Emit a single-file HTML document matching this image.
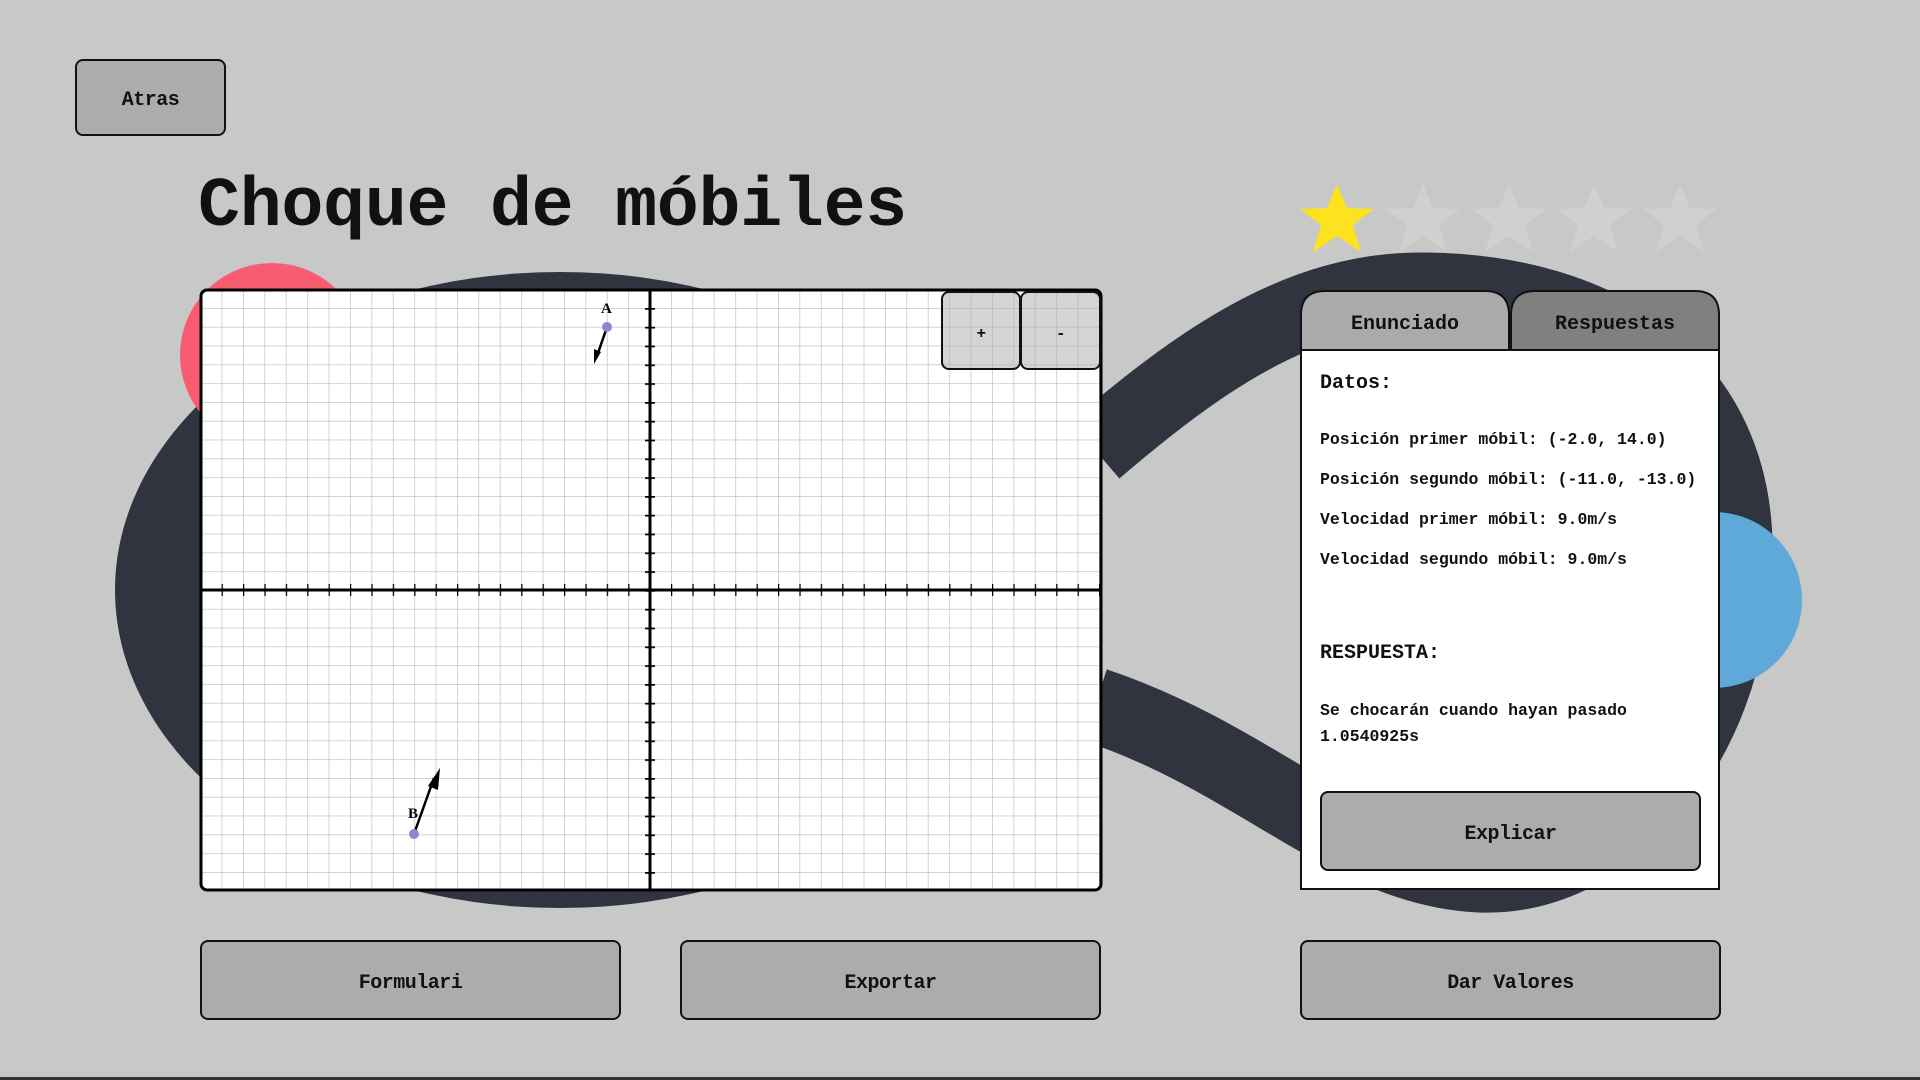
<!DOCTYPE html>
<html><head><meta charset="utf-8"><style>
*{margin:0;padding:0;box-sizing:border-box}
body{width:1920px;height:1080px;background:#c8c8c8;position:relative;overflow:hidden;font-family:"Liberation Mono","DejaVu Sans Mono",monospace}
.btn{position:absolute;background:#acacac;border:2px solid #111;border-radius:8px;display:flex;align-items:center;justify-content:center;font-weight:bold;font-size:20px;color:#111;letter-spacing:-0.5px;padding-top:6px}
.t{position:absolute;font-weight:bold;color:#111;white-space:nowrap}
</style></head><body>
<svg width="1920" height="1080" style="position:absolute;left:0;top:0">
<ellipse cx="560" cy="590" rx="445" ry="318" fill="#30343e"/>
<path d="M1095,450 C1200,360 1300,290 1420,290 C1600,290 1740,380 1735,560 C1730,760 1600,880 1480,875 C1350,870 1260,760 1095,705" fill="none" stroke="#30343e" stroke-width="75"/>
<circle cx="272" cy="355" r="92" fill="#f95c70"/>
<circle cx="1714" cy="600" r="88" fill="#5ea9d8"/>
<defs><pattern id="g" width="21.4" height="18.8" patternUnits="userSpaceOnUse" x="7.6" y="7.2"><path d="M0,0 V18.8 M0,0 H21.4" stroke="#c4c4c4" stroke-width="1.5" fill="none"/></pattern>
<pattern id="tx" width="21.4" height="20" patternUnits="userSpaceOnUse" x="7.6" y="0"><path d="M0,0 V20" stroke="#000" stroke-width="2.5"/></pattern>
<pattern id="ty" width="20" height="18.8" patternUnits="userSpaceOnUse" x="0" y="7.2"><path d="M0,0 H20" stroke="#000" stroke-width="3.5"/></pattern></defs>
<rect x="201" y="290" width="900" height="600" rx="6" fill="#fff"/>
<rect x="201" y="290" width="900" height="600" fill="url(#g)"/>
<rect x="201" y="584" width="900" height="12" fill="url(#tx)"/>
<rect x="645" y="290" width="10" height="600" fill="url(#ty)"/>
<line x1="201" y1="590" x2="1101" y2="590" stroke="#000" stroke-width="3"/>
<line x1="650" y1="290" x2="650" y2="890" stroke="#000" stroke-width="3"/>
<rect x="201" y="290" width="900" height="600" rx="6" fill="none" stroke="#000" stroke-width="3"/>
<line x1="607" y1="327" x2="597" y2="356" stroke="#000" stroke-width="2.5"/><path d="M594,364 L594,349 L601,352 Z" fill="#000"/>
<circle cx="607" cy="327" r="5" fill="#8a86d0"/>
<text x="601" y="313" font-family="Liberation Serif" font-weight="bold" font-size="15">A</text>
<line x1="414" y1="834" x2="434" y2="778" stroke="#000" stroke-width="2.5"/><path d="M440,768 L438,790 L428,786 Z" fill="#000"/>
<circle cx="414" cy="834" r="5" fill="#8a86d0"/>
<text x="408" y="818" font-family="Liberation Serif" font-weight="bold" font-size="15">B</text>
<g fill="#fde21f"><path d="M1337,184 L1347,208 L1374,209 L1353,225 L1361,252 L1337,236 L1313,252 L1321,225 L1300,209 L1327,208 Z"/></g>
<g fill="#d0d0d0">
<path d="M1423,184 L1433,208 L1460,209 L1439,225 L1447,252 L1423,236 L1399,252 L1407,225 L1386,209 L1413,208 Z"/>
<path d="M1509,184 L1519,208 L1546,209 L1525,225 L1533,252 L1509,236 L1485,252 L1493,225 L1472,209 L1499,208 Z"/>
<path d="M1594,184 L1604,208 L1631,209 L1610,225 L1618,252 L1594,236 L1570,252 L1578,225 L1557,209 L1584,208 Z"/>
<path d="M1680,184 L1690,208 L1717,209 L1696,225 L1704,252 L1680,236 L1656,252 L1664,225 L1643,209 L1670,208 Z"/></g>
<rect x="1301" y="350" width="418" height="539" fill="#fff" stroke="#111" stroke-width="2"/>
<path d="M1301,350 V315 Q1301,291 1325,291 H1485 Q1509,291 1509,315 V350 Z" fill="#aaa" stroke="#111" stroke-width="2"/>
<path d="M1511,350 V315 Q1511,291 1535,291 H1695 Q1719,291 1719,315 V350 Z" fill="#808080" stroke="#111" stroke-width="2"/>
<rect x="0" y="1077" width="1920" height="3" fill="#333"/>
</svg>
<div class="btn" style="left:941px;top:291px;width:80px;height:79px;background:rgba(170,170,170,.5);font-size:16px">+</div>
<div class="btn" style="left:1020px;top:291px;width:81px;height:79px;background:rgba(170,170,170,.5);font-size:16px">-</div>
<div class="btn" style="left:75px;top:59px;width:151px;height:77px">Atras</div>
<div class="t" style="left:198px;top:168px;font-size:70px;letter-spacing:-0.3px">Choque de móbiles</div>
<div class="t" style="left:1301px;top:313px;width:208px;text-align:center;font-size:20px">Enunciado</div>
<div class="t" style="left:1511px;top:313px;width:208px;text-align:center;font-size:20px">Respuestas</div>
<div class="t" style="left:1320px;top:372px;font-size:20px">Datos:</div>
<div class="t" style="left:1320px;top:430px;font-size:16.5px">Posición primer móbil: (-2.0, 14.0)</div>
<div class="t" style="left:1320px;top:470px;font-size:16.5px">Posición segundo móbil: (-11.0, -13.0)</div>
<div class="t" style="left:1320px;top:510px;font-size:16.5px">Velocidad primer móbil: 9.0m/s</div>
<div class="t" style="left:1320px;top:550px;font-size:16.5px">Velocidad segundo móbil: 9.0m/s</div>
<div class="t" style="left:1320px;top:642px;font-size:20px">RESPUESTA:</div>
<div class="t" style="left:1320px;top:698px;font-size:16.5px;line-height:26px">Se chocarán cuando hayan pasado<br>1.0540925s</div>
<div class="btn" style="left:1320px;top:791px;width:381px;height:80px">Explicar</div>
<div class="btn" style="left:200px;top:940px;width:421px;height:80px">Formulari</div>
<div class="btn" style="left:680px;top:940px;width:421px;height:80px">Exportar</div>
<div class="btn" style="left:1300px;top:940px;width:421px;height:80px">Dar Valores</div>
</body></html>
